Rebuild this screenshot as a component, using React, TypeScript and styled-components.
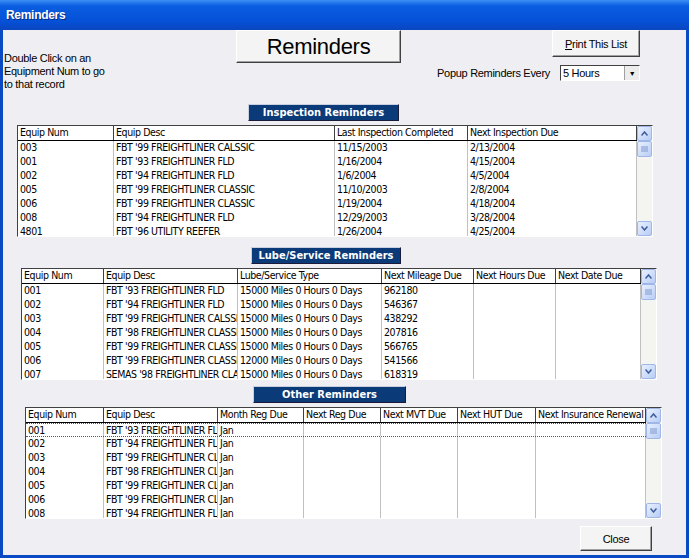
import styled, { createGlobalStyle } from "styled-components";

const Global = createGlobalStyle`
  html, body { margin: 0; padding: 0; background: #ffffff; }
  body { font-family: "Liberation Sans", sans-serif; font-size: 11px; }
`;

const Window = styled.div`
  width: 689px;
  height: 558px;
  box-sizing: border-box;
  background: #0a49c4;
  padding: 0 3px 3px 3px;
  display: flex;
  flex-direction: column;
`;

const TitleBar = styled.div`
  height: 30px;
  margin: 0 -3px;
  padding-left: 6px;
  display: flex;
  align-items: center;
  background: linear-gradient(180deg, #3d8ff5 0%, #0a5de0 20%, #0551d8 70%, #0a46bf 100%);
  color: #fff;
  font-family: "Liberation Sans", sans-serif;
  font-weight: bold;
  font-size: 12px;
  letter-spacing: -0.3px;
  text-shadow: 1px 1px #0a2a80;
`;

const Body = styled.div`
  flex: 1;
  background: #efeff3;
  display: flex;
  flex-direction: column;
`;

const Top = styled.div`
  display: flex;
  height: 72px;
`;

const HelpText = styled.div`
  width: 232px;
  padding: 22px 0 0 1px;
  font-family: "Liberation Sans", sans-serif;
  font-size: 11px;
  line-height: 13px;
  letter-spacing: -0.3px;
`;

const RaisedButton = styled.div<{ $w: number; $h: number; $fs: number }>`
  width: ${(p) => p.$w}px;
  height: ${(p) => p.$h}px;
  box-sizing: border-box;
  display: flex;
  align-items: center;
  justify-content: center;
  background: #f4f4f4;
  border: 1px solid;
  border-color: #ffffff #404040 #404040 #ffffff;
  box-shadow: inset -1px -1px #a0a0a0;
  font-family: "Liberation Sans", sans-serif;
  font-size: ${(p) => p.$fs}px;
  letter-spacing: -0.3px;
  color: #000;
`;

const RightCol = styled.div`
  margin-left: auto;
  margin-right: 46px;
  display: flex;
  flex-direction: column;
  align-items: flex-end;
`;

const PopupRow = styled.div`
  display: flex;
  align-items: center;
  gap: 10px;
  margin-top: 8px;
  font-family: "Liberation Sans", sans-serif;
  letter-spacing: -0.3px;
`;

const Combo = styled.div`
  width: 80px;
  height: 16px;
  box-sizing: border-box;
  background: #fff;
  border: 1px solid;
  border-color: #404040 #fff #fff #404040;
  display: flex;
  align-items: center;
  padding-left: 2px;
`;

const ComboArrow = styled.div`
  margin-left: auto;
  width: 14px;
  height: 14px;
  background: #ececec;
  border-left: 1px solid #a0a0a0;
  display: flex;
  align-items: center;
  justify-content: center;
  font-size: 7px;
`;

const Section = styled.div<{ $left: number }>`
  display: flex;
  flex-direction: column;
  margin-left: ${(p) => p.$left}px;
`;

const Label = styled.div<{ $x: number; $w: number; $top: number }>`
  margin: ${(p) => p.$top}px 0 4px ${(p) => p.$x}px;
  width: ${(p) => p.$w}px;
  height: 17px;
  box-sizing: border-box;
  background: #0b3a78;
  color: #fff;
  font-family: "DejaVu Sans Condensed", "DejaVu Sans", sans-serif;
  font-weight: bold;
  font-size: 11px;
  display: flex;
  align-items: center;
  justify-content: center;
  border: 1px solid;
  border-color: #c8d0e0 #1a1a3a #1a1a3a #c8d0e0;
`;

const GridBox = styled.div<{ $w: number }>`
  width: ${(p) => p.$w}px;
  height: 112px;
  box-sizing: border-box;
  background: #fff;
  border: 1px solid;
  border-color: #404040 #ffffff #ffffff #404040;
  display: flex;
  overflow: hidden;
`;

const Table = styled.div`
  flex: 1;
  display: flex;
  flex-direction: column;
`;

const Row = styled.div<{ $head?: boolean; $sel?: boolean }>`
  display: flex;
  height: ${(p) => (p.$head ? 15 : 14)}px;
  box-sizing: border-box;
  flex-shrink: 0;
  border-bottom: ${(p) => (p.$head ? "1px solid #000" : p.$sel ? "1px dotted #555" : "none")};
  border-top: ${(p) => (p.$sel ? "1px dotted #555" : "none")};
`;

const Cell = styled.div<{ $w: number; $head?: boolean }>`
  width: ${(p) => p.$w}px;
  flex-shrink: 0;
  box-sizing: border-box;
  padding-left: 2px;
  border-right: 1px solid ${(p) => (p.$head ? "#404040" : "#c0c0c0")};
  white-space: nowrap;
  overflow: hidden;
  font-family: "DejaVu Sans Condensed", "DejaVu Sans", sans-serif;
  font-size: 10.5px;
  line-height: 13px;
  letter-spacing: -0.4px;
  color: #000;
`;

const Scroll = styled.div`
  width: 15px;
  background: #f4f4f0;
  display: flex;
  flex-direction: column;
  justify-content: space-between;
`;

const ScrollBtn = styled.div`
  height: 15px;
  box-sizing: border-box;
  background: linear-gradient(135deg, #e8f0ff, #b8cdf5);
  border: 1px solid #9fb6e6;
  border-radius: 2px;
  display: flex;
  align-items: center;
  justify-content: center;
`;

const Thumb = styled(ScrollBtn)`
  height: 16px;
`;

const ScrollTop = styled.div`
  display: flex;
  flex-direction: column;
`;

const Footer = styled.div`
  display: flex;
  justify-content: flex-end;
  padding: 7px 34px 0 0;
`;

const Arrow = ({ up }: { up?: boolean }) => (
  <svg width="7" height="5" viewBox="0 0 7 5">
    <path d={up ? "M0.5 4.5 L3.5 1 L6.5 4.5" : "M0.5 0.5 L3.5 4 L6.5 0.5"} stroke="#3a5a9a" strokeWidth="1.5" fill="none" />
  </svg>
);

const Grip = () => (
  <svg width="7" height="7" viewBox="0 0 7 7">
    <path d="M0 1H7M0 3H7M0 5H7" stroke="#7f98cc" strokeWidth="1" />
  </svg>
);

type GridProps = { widths: number[]; head: string[]; rows: string[][]; sel?: boolean };

const Grid = ({ widths, head, rows, sel }: GridProps) => (
  <GridBox $w={widths.reduce((a, b) => a + b, 0) + 17}>
    <Table>
      <Row $head>
        {head.map((h, i) => (
          <Cell key={i} $w={widths[i]} $head>
            {h}
          </Cell>
        ))}
      </Row>
      {rows.map((r, j) => (
        <Row key={j} $sel={sel && j === 0}>
          {widths.map((w, i) => (
            <Cell key={i} $w={w}>
              {r[i] ?? ""}
            </Cell>
          ))}
        </Row>
      ))}
    </Table>
    <Scroll>
      <ScrollTop>
        <ScrollBtn><Arrow up /></ScrollBtn>
        <Thumb><Grip /></Thumb>
      </ScrollTop>
      <ScrollBtn><Arrow /></ScrollBtn>
    </Scroll>
  </GridBox>
);

const insp = [
  ["003", "FBT '99 FREIGHTLINER CALSSIC", "11/15/2003", "2/13/2004"],
  ["001", "FBT '93 FREIGHTLINER FLD", "1/16/2004", "4/15/2004"],
  ["002", "FBT '94 FREIGHTLINER FLD", "1/6/2004", "4/5/2004"],
  ["005", "FBT '99 FREIGHTLINER CLASSIC", "11/10/2003", "2/8/2004"],
  ["006", "FBT '99 FREIGHTLINER CLASSIC", "1/19/2004", "4/18/2004"],
  ["008", "FBT '94 FREIGHTLINER FLD", "12/29/2003", "3/28/2004"],
  ["4801", "FBT '96 UTILITY REEFER", "1/26/2004", "4/25/2004"],
];

const lube = [
  ["001", "FBT '93 FREIGHTLINER FLD", "15000 Miles 0 Hours 0 Days", "962180"],
  ["002", "FBT '94 FREIGHTLINER FLD", "15000 Miles 0 Hours 0 Days", "546367"],
  ["003", "FBT '99 FREIGHTLINER CALSSIC", "15000 Miles 0 Hours 0 Days", "438292"],
  ["004", "FBT '98 FREIGHTLINER CLASSIC", "15000 Miles 0 Hours 0 Days", "207816"],
  ["005", "FBT '99 FREIGHTLINER CLASSIC", "15000 Miles 0 Hours 0 Days", "566765"],
  ["006", "FBT '99 FREIGHTLINER CLASSIC", "12000 Miles 0 Hours 0 Days", "541566"],
  ["007", "SEMAS '98 FREIGHTLINER CLASSIC", "15000 Miles 0 Hours 0 Days", "618319"],
];

const other = [
  ["001", "FBT '93 FREIGHTLINER FLD", "Jan"],
  ["002", "FBT '94 FREIGHTLINER FLD", "Jan"],
  ["003", "FBT '99 FREIGHTLINER CLASSIC", "Jan"],
  ["004", "FBT '98 FREIGHTLINER CLASSIC", "Jan"],
  ["005", "FBT '99 FREIGHTLINER CLASSIC", "Jan"],
  ["006", "FBT '99 FREIGHTLINER CLASSIC", "Jan"],
  ["008", "FBT '94 FREIGHTLINER FLD", "Jan"],
];

export default function App() {
  return (
    <>
      <Global />
      <Window>
        <TitleBar>Reminders</TitleBar>
        <Body>
          <Top>
            <HelpText>
              Double Click on an
              <br />
              Equipment Num to go
              <br />
              to that record
            </HelpText>
            <RaisedButton $w={165} $h={33} $fs={22}>
              Reminders
            </RaisedButton>
            <RightCol>
              <RaisedButton $w={88} $h={27} $fs={11}>
                <span><u>P</u>rint This List</span>
              </RaisedButton>
              <PopupRow>
                Popup Reminders Every
                <Combo>
                  5 Hours
                  <ComboArrow>▼</ComboArrow>
                </Combo>
              </PopupRow>
            </RightCol>
          </Top>
          <Section $left={14}>
            <Label $x={231} $w={151} $top={2}>Inspection Reminders</Label>
            <Grid
              widths={[96, 221, 133, 169]}
              head={["Equip Num", "Equip Desc", "Last Inspection Completed", "Next Inspection Due"]}
              rows={insp}
            />
          </Section>
          <Section $left={18}>
            <Label $x={230} $w={150} $top={10}>Lube/Service Reminders</Label>
            <Grid
              widths={[82, 134, 144, 92, 82, 85]}
              head={["Equip Num", "Equip Desc", "Lube/Service Type", "Next Mileage Due", "Next Hours Due", "Next Date Due"]}
              rows={lube}
            />
          </Section>
          <Section $left={22}>
            <Label $x={228} $w={153} $top={6}>Other Reminders</Label>
            <Grid
              widths={[78, 114, 86, 77, 77, 78, 110]}
              head={["Equip Num", "Equip Desc", "Month Reg Due", "Next Reg Due", "Next MVT Due", "Next HUT Due", "Next Insurance Renewal"]}
              rows={other}
              sel
            />
          </Section>
          <Footer>
            <RaisedButton $w={72} $h={25} $fs={11}>Close</RaisedButton>
          </Footer>
        </Body>
      </Window>
    </>
  );
}
